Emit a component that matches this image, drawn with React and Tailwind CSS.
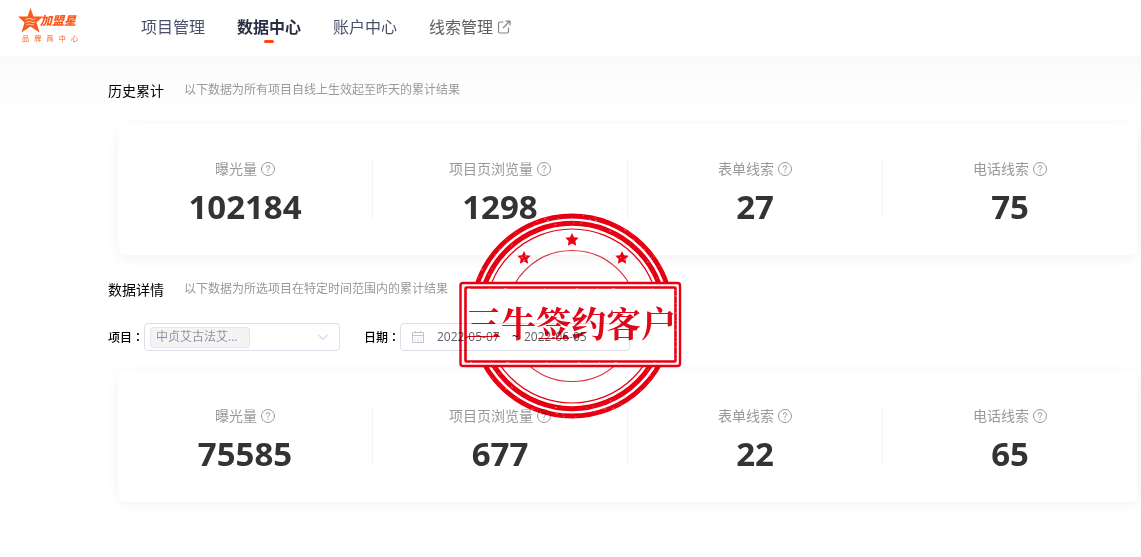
import React from 'react';

const navItems = [
  { label: '项目管理', color: 'text-[#4a506a]' },
  { label: '数据中心', color: 'font-bold text-[#2b2f42]', active: true },
  { label: '账户中心', color: 'text-[#4a506a]' },
  { label: '线索管理', color: 'text-[#606060]', external: true },
];

const history = [
  { label: '曝光量', value: '102184' },
  { label: '项目页浏览量', value: '1298' },
  { label: '表单线索', value: '27' },
  { label: '电话线索', value: '75' },
];

const details = [
  { label: '曝光量', value: '75585' },
  { label: '项目页浏览量', value: '677' },
  { label: '表单线索', value: '22' },
  { label: '电话线索', value: '65' },
];

function Logo() {
  return (
    <a href="#" className="flex w-[60px] flex-col text-[#fb5a1e]">
      <span className="flex items-center">
        <svg className="h-[25px] w-[25px] shrink-0" viewBox="0 0 25 25" fill="currentColor" aria-hidden="true">
          <path d="M12.500 0l3 8.500 9.500 0-6.500 6 3 10-9-6-9 6 3-10L0 8.500l9.500 0z" />
          <path d="M7.500 11.500q3-2 5.500-.5t4.500-.5M8 14.500q3-2 5.500-.5t4-.5M8.500 17q2.500-1.500 4-.5t3.500 0" stroke="#fff" strokeWidth="0.7" fill="none" />
        </svg>
        <span className="-ml-[3px] whitespace-nowrap text-xs font-black italic leading-4">加盟星</span>
      </span>
      <span className="flex justify-between pl-1 text-[7px] leading-3">
        {['品', '牌', '商', '中', '心'].map((c) => (
          <span key={c}>{c}</span>
        ))}
      </span>
    </a>
  );
}

function ExternalIcon() {
  return (
    <svg className="h-[14px] w-[14px]" viewBox="0 0 14 14" fill="none" stroke="#858585" strokeWidth="1.200" aria-hidden="true">
      <path d="M6.500 2H3Q1.500 2 1.500 3.500v8Q1.500 13 3 13h7q1.500 0 1.500-1.500V7.500M6 8l6.500-6.500M8.500 1.200H13v4.300" />
    </svg>
  );
}

function HelpIcon() {
  return (
    <svg className="h-[14px] w-[14px]" viewBox="0 0 14 14" fill="none" stroke="#999" aria-hidden="true">
      <circle cx="7" cy="7" r="6.500" />
      <path d="M5.200 5.500Q5.200 3.700 7 3.700t1.800 1.600Q8.800 6.300 7 7.500v1.300M7 9.800v1.200" />
    </svg>
  );
}

function StatCard({ stats }) {
  return (
    <div className="ml-[10px] grid grid-cols-4 rounded-lg bg-white py-[37px] shadow-[0_3px_14px_rgba(0,0,0,0.05)]">
      {stats.map((s) => (
        <div key={s.label} className="flex h-[57px] flex-col items-center border-r border-[#f2f2f2] last:border-transparent">
          <div className="flex items-center gap-1 text-sm leading-4 text-[#999]">
            {s.label}
            <HelpIcon />
          </div>
          <div className="mt-[10px] font-['Open_Sans','Noto_Sans',sans-serif] text-[33px] font-bold leading-10 text-[#333]">{s.value}</div>
        </div>
      ))}
    </div>
  );
}

function SectionTitle({ title, note }) {
  return (
    <div className="flex h-5 items-start gap-5">
      <h2 className="text-sm leading-5 text-black">{title}</h2>
      <p className="text-xs leading-[18px] text-[#999]">{note}</p>
    </div>
  );
}

function Star({ x, y, r }) {
  return (
    <path
      transform={`translate(${x} ${y}) scale(${r})`}
      d="M0-1L.29-.4.95-.31.48.15.59.81 0 .5-.59.81-.48.15-.95-.31-.29-.4z"
      fill="#f00010"
      stroke="none"
    />
  );
}

function Stamp() {
  return (
    <svg
      className="pointer-events-none absolute left-[458px] top-[212px] h-[208px] w-[226px] mix-blend-multiply"
      viewBox="0 0 226 208"
      fill="none"
      stroke="#e60012"
    >
      <defs>
        <clipPath id="outside">
          <path d="M0 0h226v70H0zM0 155h226v53H0z" />
        </clipPath>
      </defs>
      <g clipPath="url(#outside)">
        <circle cx="114" cy="104" r="100" strokeWidth="4.800" />
        <circle cx="114" cy="104" r="92.700" strokeWidth="5" />
        <circle cx="114" cy="104" r="87" strokeWidth="1.200" />
        <circle cx="114" cy="104" r="65.500" strokeWidth="1.200" stroke="#d9303a" />
        <g stroke="#fff" strokeWidth="0.8" opacity="0.6">
          <circle cx="114" cy="104" r="98.500" strokeDasharray="1 13 2 9 1 31 1 5 2 41" />
          <circle cx="114" cy="104" r="101" strokeDasharray="1 23 1 7 2 37 1 11" />
          <circle cx="114" cy="104" r="93" strokeDasharray="2 17 1 6 1 29 2 47" />
        </g>
      </g>
      <Star x={114} y={28} r={7} />
      <Star x={66} y={46} r={7} />
      <Star x={164} y={46} r={7} />
      <path d="M63 45l2 1m2-3l1 2m-3 4l2-1M162 45l1 1m3 2l1-1" stroke="#fff" strokeWidth="0.6" />
      <rect x="2.500" y="71" width="219.500" height="83" rx="2.500" strokeWidth="2.400" />
      <rect x="7.500" y="75.500" width="210" height="74" rx="1" strokeWidth="2.600" />
      <g stroke="#fff" strokeWidth="0.7" opacity="0.6">
        <path d="M10 76.500h205M12 150.500h200" strokeDasharray="2 19 1 14 3 37 1 31" />
        <path d="M218 78v70" strokeDasharray="1 4 2 6 1 3" />
      </g>
      <text
        x="8"
        y="125"
        fill="#e0091c"
        stroke="none"
        className="font-['Noto_Serif_CJK_SC','Noto_Sans_CJK_SC',serif] text-[35px] font-bold"
      >
        三牛签约客户
      </text>
    </svg>
  );
}

export default function App() {
  return (
    <div className="relative min-h-screen bg-white pb-12 font-['Open_Sans','Noto_Sans_CJK_SC',sans-serif]">
      <header className="flex h-14 items-start bg-white pl-[18px]">
        <div className="pt-2">
          <Logo />
        </div>
        <nav className="ml-[63px] flex gap-8 pt-[17px]">
          {navItems.map((n) => (
            <a key={n.label} href="#" className={`flex flex-col items-center gap-[3px] text-base leading-5 ${n.color}`}>
              <span className="flex items-center gap-1">
                {n.label}
                {n.external && <ExternalIcon />}
              </span>
              {n.active && <span className="h-[3px] w-[10px] rounded-full bg-[#fc4a0f]" />}
            </a>
          ))}
        </nav>
      </header>

      <main className="bg-[linear-gradient(#fafafa,#ffffff_56px)] pl-[108px] pr-[3px] pt-[25px]">
        <SectionTitle title="历史累计" note="以下数据为所有项目自线上生效起至昨天的累计结果" />
        <div className="mt-[23px]">
          <StatCard stats={history} />
        </div>

        <div className="mt-[25px]">
          <SectionTitle title="数据详情" note="以下数据为所选项目在特定时间范围内的累计结果" />
        </div>
        <form className="mb-5 mt-[23px] flex items-center text-xs">
          <label htmlFor="project" className="w-9 whitespace-nowrap font-medium leading-4 text-black">
            项目<span className="font-['Noto_Sans_CJK_TC',sans-serif]" lang="zh-TW">：</span>
          </label>
          <div className="flex h-7 w-[196px] items-center justify-between rounded border border-[#dcdfe9] bg-white pl-[5px] pr-[10px]">
            <select
              id="project"
              className="h-[21px] w-[100px] appearance-none rounded-[3px] border border-[#e6e7ea] bg-[#f4f4f5] px-[5px] text-xs leading-4 text-[#909399]"
            >
              <option>中贞艾古法艾...</option>
            </select>
            <svg className="h-3 w-3" viewBox="0 0 12 12" fill="none" stroke="#c0c4cc" aria-hidden="true">
              <path d="M1 3.500l5 5 5-5" />
            </svg>
          </div>
          <label htmlFor="start" className="ml-6 w-9 whitespace-nowrap font-medium leading-4 text-black">
            日期<span className="font-['Noto_Sans_CJK_TC',sans-serif]" lang="zh-TW">：</span>
          </label>
          <div className="flex h-7 w-[230px] items-center rounded border border-[#dcdfe9] bg-white pl-[11px] text-[#606266]">
            <svg className="mr-[13px] h-3 w-3" viewBox="0 0 12 12" fill="none" stroke="#c0c4cc" aria-hidden="true">
              <path d="M.5 1.500h11v10H.5zM.5 4.500h11M3.500 0v2.500M8.500 0v2.500M2.500 7h1M5.500 7h1M8.500 7h1M2.500 9.500h1M5.500 9.500h1M8.500 9.500h1" />
            </svg>
            <input id="start" defaultValue="2022-05-07" className="w-[70px] bg-transparent text-xs" />
            <span className="w-[17px] text-center text-black">~</span>
            <input aria-label="结束日期" defaultValue="2022-06-05" className="w-[70px] bg-transparent text-xs" />
          </div>
        </form>
        <StatCard stats={details} />
      </main>
      <Stamp />
    </div>
  );
}
